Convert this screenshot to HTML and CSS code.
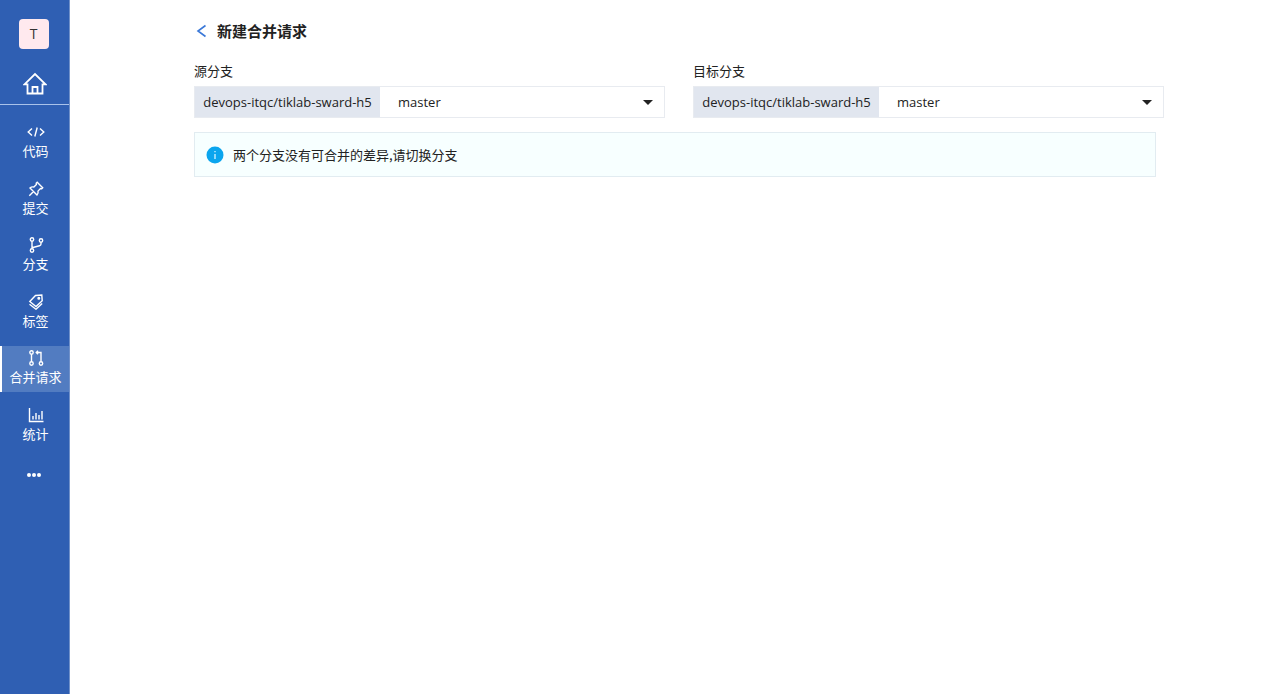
FILE: index.html
```html
<!DOCTYPE html>
<html lang="zh-CN">
<head>
    <meta charset="UTF-8">
    <meta name="viewport" content="width=device-width, initial-scale=1.0">
    <title>新建合并请求</title>
    <link rel="stylesheet" href="styles.css">
</head>
<body>
    <aside class="sidebar">
        <div class="sidebar-top">
            <a class="repo-logo" href="#">T</a>
            <a class="home" href="#" aria-label="首页">
                <svg width="24" height="24" viewBox="0 0 24 24">
                    <path d="M1.500 12.300 12 2l10.500 10.300H19.500V21.500H4.500V12.300ZM9.500 21.500v-6.500h5v6.500"/>
                </svg>
            </a>
        </div>
        <nav class="menu">
            <a class="menu-item" href="#">
                <svg width="18" height="16" viewBox="0 0 18 16">
                    <path d="M5 4.500 1.200 8l3.800 3.500M13 4.500 16.800 8 13 11.500M10.200 3.500l-2.400 9"/>
                </svg>
                <span>代码</span>
            </a>
            <a class="menu-item" href="#">
                <svg width="16" height="16" viewBox="0 0 16 16">
                    <path d="M9.200 1.300l5.500 5.500-1 1-1.200-.2-2.500 2.500c.4 1.500 0 2.900-1 3.900L2 7c1-1 2.400-1.400 3.900-1l2.500-2.500-.2-1.200zM5.500 10.500 1.300 14.700"/>
                </svg>
                <span>提交</span>
            </a>
            <a class="menu-item" href="#">
                <svg width="16" height="16" viewBox="0 0 16 16">
                    <circle cx="4" cy="2.500" r="1.700"/>
                    <circle cx="4" cy="13.500" r="1.700"/>
                    <circle cx="13" cy="3.500" r="1.700"/>
                    <path d="M4 4.200v7.600M13 5.200v1.800c0 1-.5 1.500-1.500 1.700L4 10.700"/>
                </svg>
                <span>分支</span>
            </a>
            <a class="menu-item" href="#">
                <svg width="16" height="16" viewBox="0 0 16 16">
                    <path d="M7.500 1.500 13.800 1l.4 5.800-6.200 5.700L1.800 7.500zM1.500 10.300 8 15.200l6.200-5.700"/>
                    <circle cx="10.800" cy="4.300" r=".8"/>
                </svg>
                <span>标签</span>
            </a>
            <a class="menu-item active" href="#">
                <svg width="16" height="16" viewBox="0 0 16 16">
                    <circle cx="3.500" cy="2.500" r="1.700"/>
                    <circle cx="3.500" cy="13.500" r="1.700"/>
                    <circle cx="13" cy="13.500" r="1.700"/>
                    <path d="M3.500 4.200v7.600M8.500 2.500H13v9.300M10 .8 8.300 2.500 10 4.200"/>
                </svg>
                <span>合并请求</span>
            </a>
            <a class="menu-item" href="#">
                <svg width="16" height="16" viewBox="0 0 16 16">
                    <path d="M1.500 1v13.500H15.500M5 12.500V9M8 12.500V6M11 12.500V8M14 12.500V4"/>
                </svg>
                <span>统计</span>
            </a>
        </nav>
        <button class="more" type="button" aria-label="更多">
            <svg width="16" height="6" viewBox="0 0 16 6">
                <circle cx="3" cy="3" r="2"/>
                <circle cx="8" cy="3" r="2"/>
                <circle cx="13" cy="3" r="2"/>
            </svg>
        </button>
    </aside>
    <main class="content">
        <header class="page-header">
            <a class="back" href="#" aria-label="返回">
                <svg width="16" height="16" viewBox="0 0 16 16">
                    <path d="M11.500 2.500 4 8l7.500 5.500"/>
                </svg>
            </a>
            <h1>新建合并请求</h1>
        </header>
        <form class="branches">
            <div class="branch">
                <label for="source">源分支</label>
                <div class="branch-box">
                    <span class="repo">devops-itqc/tiklab-sward-h5</span>
                    <select id="source" name="source">
                        <option>master</option>
                    </select>
                </div>
            </div>
            <div class="branch">
                <label for="target">目标分支</label>
                <div class="branch-box">
                    <span class="repo">devops-itqc/tiklab-sward-h5</span>
                    <select id="target" name="target">
                        <option>master</option>
                    </select>
                </div>
            </div>
        </form>
        <div class="notice">
            <svg width="18" height="18" viewBox="0 0 18 18">
                <circle cx="9" cy="9" r="8.500" fill="#0ba5ee"/>
                <path d="M9 8v5M9 5v1.300" stroke="#d8f3ff" stroke-width="1.300"/>
            </svg>
            <span>两个分支没有可合并的差异,请切换分支</span>
        </div>
    </main>
</body>
</html>
```
FILE: styles.css
```css
* {
    box-sizing: border-box;
}
body {
    display: flex;
    min-height: 100vh;
    margin: 0;
    background: #fff;
    color: #222;
    font-family: "Noto Sans CJK SC", sans-serif;
    font-size: 13px;
    line-height: 20px;
}
a {
    color: inherit;
    text-decoration: none;
}
svg {
    display: block;
    fill: none;
}

/* sidebar */
.sidebar {
    flex: none;
    width: 70px;
    border-right: 1px solid #7191c9;
    background: #2f5fb3;
    color: #fff;
}
.sidebar svg {
    stroke: #fff;
    stroke-width: 1.4;
}
.sidebar-top {
    display: flex;
    flex-direction: column;
    align-items: center;
    gap: 23px;
    height: 105px;
    padding-top: 19px;
    border-bottom: 1px solid #a9c2ea;
}
.repo-logo {
    width: 30px;
    height: 30px;
    margin-right: 2px;
    border-radius: 4px;
    background: #ffe9ee;
    color: #333;
    font-family: "Open Sans", sans-serif;
    font-size: 14px;
    line-height: 30px;
    text-align: center;
}
.sidebar .home svg {
    stroke-width: 1.8;
}
.menu {
    display: flex;
    flex-direction: column;
    justify-content: space-between;
    height: 329px;
    margin-top: 15px;
}
.menu-item {
    display: flex;
    flex-direction: column;
    align-items: center;
    height: 46px;
    padding-top: 4px;
    border-left: 2px solid transparent;
    line-height: 22px;
    white-space: nowrap;
}
.menu-item.active {
    border-color: #fff;
    background: #527cc1;
}
.more {
    display: block;
    margin: 17px 20px;
    padding: 6px;
    border: 0;
    background: none;
    cursor: pointer;
}
.sidebar .more svg {
    fill: #fff;
    stroke: none;
}

/* new merge request */
.content {
    flex: 1;
    padding: 19px 116px 0 124px;
}
.page-header {
    display: flex;
    align-items: center;
    gap: 7px;
}
.page-header h1 {
    margin: 0;
    font-size: 15px;
    line-height: 24px;
}
.back svg {
    stroke: #3a78d8;
    stroke-width: 1.6;
}
.branches {
    display: flex;
    gap: 28px;
    margin-top: 18px;
}
.branch {
    flex: 1;
}
.branch label {
    display: block;
    margin-bottom: 5px;
}
.branch-box {
    display: flex;
    height: 32px;
    border: 1px solid #e8ebf0;
    font-family: "Open Sans", sans-serif;
}
.repo {
    flex: none;
    width: 185px;
    background: #e1e6ef;
    line-height: 31px;
    text-align: center;
}
.branch-box select {
    flex: 1;
    min-width: 0;
    padding: 0 18px;
    border: 0;
    background: #fff;
    color: inherit;
    font: inherit;
    appearance: none;
}
.branch-box::after {
    content: "";
    align-self: center;
    margin-right: 11px;
    border: 5px solid transparent;
    border-top-color: #222;
    border-bottom: 0;
    pointer-events: none;
}
.notice {
    display: flex;
    align-items: center;
    gap: 9px;
    height: 45px;
    margin: 14px 8px 0 0;
    padding: 0 11px;
    border: 1px solid #e2ecf1;
    background: #f7ffff;
}
```
